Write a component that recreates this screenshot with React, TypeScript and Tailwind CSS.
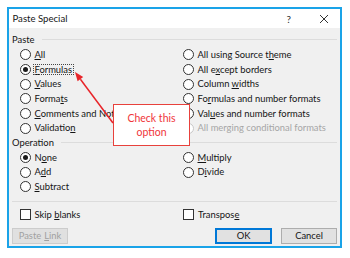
import React from "react";

const F = { fontFamily: 'Lato, "Noto Sans", sans-serif' };

function Radio({ checked, disabled }: { checked?: boolean; disabled?: boolean }) {
  return (
    <span
      className={`flex h-[11px] w-[11px] shrink-0 items-center justify-center rounded-full border bg-white ${
        disabled ? "border-[#c8c8c8]" : "border-[#333333]"
      }`}
    >
      {checked && <span className="h-[5px] w-[5px] rounded-full bg-[#1a1a1a]" />}
    </span>
  );
}

function Opt({
  pre,
  u,
  post,
  checked,
  disabled,
  focus,
}: {
  pre?: string;
  u?: string;
  post?: string;
  checked?: boolean;
  disabled?: boolean;
  focus?: boolean;
}) {
  return (
    <div className="flex h-full items-center gap-[3.5px]">
      <Radio checked={checked} disabled={disabled} />
      <span
        className={`whitespace-nowrap ${disabled ? "text-[#a6a6a6]" : "text-[#151515]"} ${
          focus ? "outline-1 outline-dotted outline-[#444] outline-offset-0 px-px -ml-px" : ""
        }`}
      >
        {pre}
        {u && <span className="underline underline-offset-[1px]">{u}</span>}
        {post}
      </span>
    </div>
  );
}

function Row({ left, right }: { left?: React.ReactNode; right?: React.ReactNode }) {
  return (
    <div className="flex h-[14.7px]">
      <div className="w-[171px] shrink-0 pl-[8px]">{left}</div>
      <div className="flex-1">{right}</div>
    </div>
  );
}

function Section({ label }: { label: string }) {
  return (
    <div className="flex h-[14.7px] items-center">
      <span className="text-[#151515]">{label}</span>
      <div className="ml-[7px] h-px flex-1 bg-[#dcdcdc]" />
    </div>
  );
}

function Check({ pre, u, post }: { pre?: string; u?: string; post?: string }) {
  return (
    <div className="flex items-center gap-[4px]">
      <span className="h-[11px] w-[11px] shrink-0 border border-[#333333] bg-white" />
      <span className="whitespace-nowrap text-[#151515]">
        {pre}
        {u && <span className="underline underline-offset-[1px]">{u}</span>}
        {post}
      </span>
    </div>
  );
}

export default function App() {
  return (
    <div className="relative h-[258px] w-[350px] bg-white pl-[7px] pt-[7px] text-[9.4px] leading-none" style={F}>
      <div className="relative flex h-[241px] w-[335px] flex-col border-2 border-[#1aa3e8] bg-[#f0f0f0]">
        <div className="flex h-[19px] shrink-0 items-center bg-white pl-[3.5px] pr-[10px]">
          <span className="text-[9.6px] text-[#151515]">Paste Special</span>
          <span className="ml-auto mr-[28px] text-[10px] text-[#333]">?</span>
          <svg width="10" height="10" viewBox="0 0 10 10" className="mr-[1px]">
            <path d="M1 1L9 9M9 1L1 9" stroke="#333" strokeWidth="1" />
          </svg>
        </div>
        <div className="flex flex-1 flex-col pl-[3px] pr-[3px] pt-[4.6px]">
          <Section label="Paste" />
          <Row left={<Opt u="A" post="ll" />} right={<Opt pre="All using Source t" u="h" post="eme" />} />
          <Row left={<Opt u="F" post="ormulas" checked focus />} right={<Opt pre="All e" u="x" post="cept borders" />} />
          <Row left={<Opt u="V" post="alues" />} right={<Opt pre="Column " u="w" post="idths" />} />
          <Row left={<Opt pre="Forma" u="t" post="s" />} right={<Opt pre="Fo" u="r" post="mulas and number formats" />} />
          <Row left={<Opt u="C" post="omments and Notes" />} right={<Opt pre="Val" u="u" post="es and number formats" />} />
          <Row left={<Opt pre="Validatio" u="n" />} right={<Opt pre="All merging conditional formats" disabled />} />
          <Section label="Operation" />
          <Row left={<Opt pre="N" u="o" post="ne" checked />} right={<Opt u="M" post="ultiply" />} />
          <Row left={<Opt pre="A" u="d" post="d" />} right={<Opt pre="D" u="i" post="vide" />} />
          <Row left={<Opt u="S" post="ubtract" />} />
          <div className="mt-[7px] h-px bg-[#dcdcdc]" />
          <div className="mt-[7px] flex h-[12px]">
            <div className="w-[171px] shrink-0 pl-[7.5px]">
              <Check pre="Skip " u="b" post="lanks" />
            </div>
            <div className="flex-1">
              <Check pre="Transpos" u="e" />
            </div>
          </div>
          <div className="mt-[7px] flex h-[16px]">
            <div className="flex w-[56px] items-center justify-center border border-[#cccccc] bg-[#e0e0e0] text-[#a0a0a0]">
              Paste <span className="ml-[3px] underline underline-offset-[1px]">L</span>ink
            </div>
            <div className="ml-auto flex w-[57px] items-center justify-center border-2 border-[#0078d7] bg-[#e1e1e1] text-[#151515]">
              OK
            </div>
            <div className="ml-[9px] flex w-[56px] items-center justify-center border border-[#adadad] bg-[#e1e1e1] text-[#151515]">
              Cancel
            </div>
          </div>
        </div>
        <div className="absolute left-[104px] top-[95px] flex h-[42px] w-[77px] flex-col items-center justify-center border border-[#e8413c] bg-white text-[10.5px] leading-[14px] text-[#f0353a]">
          <span>Check this</span>
          <span>option</span>
        </div>
      </div>
      <svg className="pointer-events-none absolute left-0 top-0" width="350" height="258" viewBox="0 0 350 258">
        <line x1="113" y1="123" x2="80.4" y2="79.2" stroke="#e8252a" strokeWidth="1.5" />
        <polygon points="75,72 83.2,77.1 77.6,81.3" fill="#e8252a" />
      </svg>
    </div>
  );
}
